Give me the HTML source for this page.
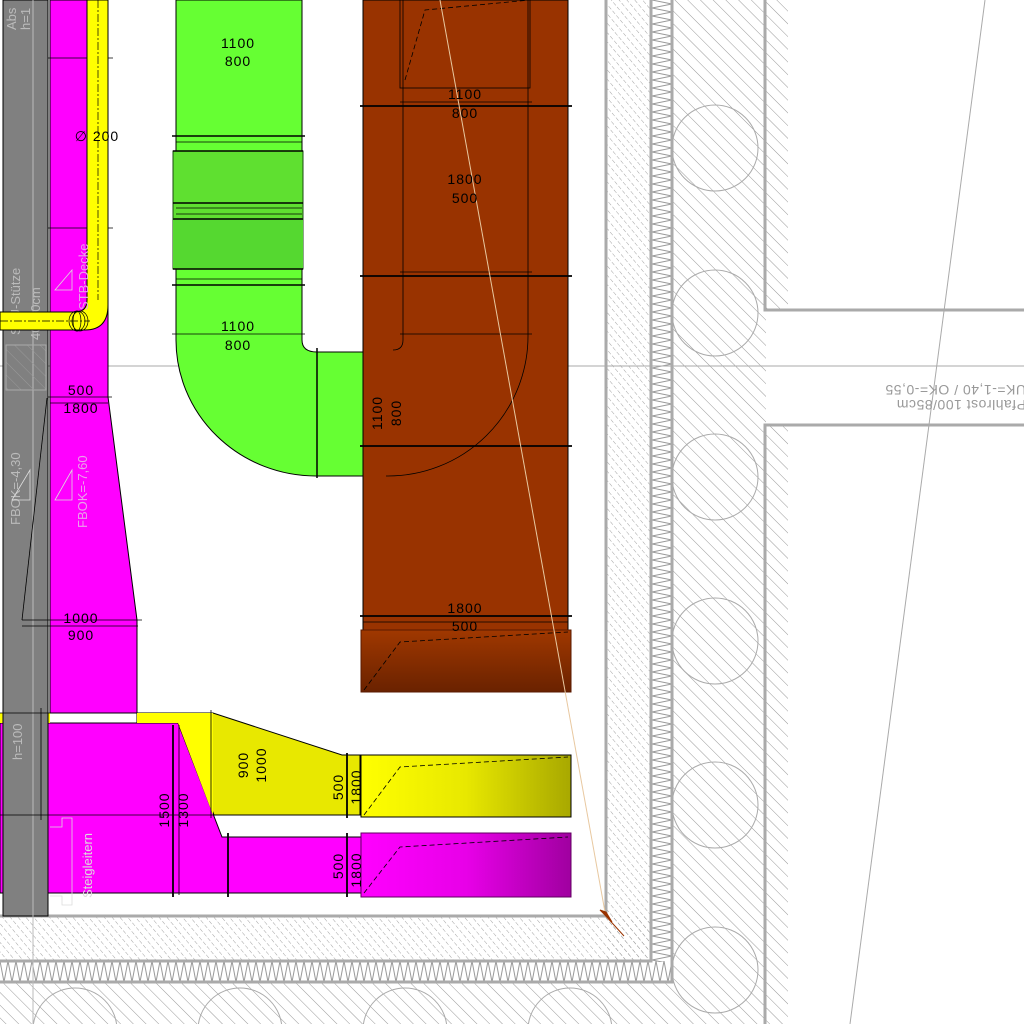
<!DOCTYPE html>
<html><head><meta charset="utf-8"><style>
html,body{margin:0;padding:0;background:#fff;}
svg{display:block;font-family:"Liberation Sans",sans-serif;}
</style></head><body>
<svg width="1024" height="1024" viewBox="0 0 1024 1024" xmlns="http://www.w3.org/2000/svg">
<defs>
<pattern id="h1" width="9" height="9" patternUnits="userSpaceOnUse" patternTransform="rotate(-45)">
<line x1="0" y1="0" x2="0" y2="9" stroke="#999" stroke-width="1"/></pattern>
<pattern id="h2" width="6" height="6" patternUnits="userSpaceOnUse" patternTransform="rotate(-40)">
<line x1="0" y1="0" x2="0" y2="6" stroke="#999" stroke-width="0.9" stroke-dasharray="4 2"/></pattern>
<pattern id="zzv" x="652" width="20" height="8" patternUnits="userSpaceOnUse">
<polyline points="0,0 20,4 0,8" fill="none" stroke="#999" stroke-width="1"/></pattern>
<pattern id="zzh" y="961" width="8" height="21" patternUnits="userSpaceOnUse">
<polyline points="0,0 4,21 8,0" fill="none" stroke="#999" stroke-width="1"/></pattern>
<linearGradient id="gy" x1="0" x2="1"><stop offset="0" stop-color="#ffff00"/><stop offset="0.5" stop-color="#e8e800"/><stop offset="1" stop-color="#a8a800"/></linearGradient>
<linearGradient id="gp" x1="0" x2="1"><stop offset="0" stop-color="#ff00ff"/><stop offset="0.5" stop-color="#e800e8"/><stop offset="1" stop-color="#a000a0"/></linearGradient>
<linearGradient id="gb" x1="0" x2="0" y1="0" y2="1"><stop offset="0" stop-color="#a03800"/><stop offset="1" stop-color="#6a2200"/></linearGradient>
</defs>

<rect x="606" y="0" width="46" height="962" fill="url(#h2)"/>
<rect x="0" y="916" width="652" height="46" fill="url(#h2)"/>
<rect x="652" y="0" width="20" height="962" fill="url(#zzv)"/>
<rect x="0" y="961" width="672" height="21" fill="url(#zzh)"/>
<rect x="672" y="0" width="116" height="1024" fill="url(#h1)"/>
<rect x="0" y="982" width="672" height="42" fill="url(#h1)"/>
<rect x="766" y="311" width="30" height="113" fill="#fff"/>
<g fill="none" stroke="#aaa" stroke-width="1">
<circle cx="715" cy="148" r="43"/><circle cx="715" cy="313" r="43"/><circle cx="715" cy="477" r="43"/>
<circle cx="715" cy="641" r="43"/><circle cx="715" cy="805" r="43"/><circle cx="715" cy="970" r="43"/>
<circle cx="75" cy="1030" r="42"/><circle cx="240" cy="1030" r="42"/><circle cx="405" cy="1030" r="42"/><circle cx="570" cy="1030" r="42"/>
</g>
<g stroke="#aaa" stroke-width="3" fill="none">
<polyline points="606,0 606,916 0,916"/>
<polyline points="651,0 651,961 0,961"/>
<polyline points="672,0 672,982 0,982"/>
<polyline points="765,0 765,310 1024,310"/>
<polyline points="1024,425 765,425 765,1024"/>
</g>
<line x1="0" y1="366" x2="1024" y2="366" stroke="#aaa" stroke-width="1"/>
<line x1="985" y1="0" x2="850" y2="1024" stroke="#aaa" stroke-width="1"/>
<g transform="rotate(180 952 395)" fill="#999" font-size="14" letter-spacing="0.5">
<text x="878" y="390">Pfahlrost 100/85cm</text>
<text x="878" y="405">UK=-1,40 / OK=-0,55</text>
</g>

<path d="M176,0 H302 V340 Q302,352 317,352 H363 V476 H316 A140,136 0 0 1 176,340 Z" fill="#66ff33" stroke="#000" stroke-width="1"/>
<rect x="173" y="151" width="130" height="118" fill="#5fe030" stroke="#1a4a10"/>
<rect x="173" y="218" width="130" height="50" fill="#55d830"/>
<g stroke="#000" stroke-width="1.5"><line x1="172" y1="136" x2="305" y2="136"/><line x1="172" y1="285" x2="305" y2="285"/>
<line x1="173" y1="151" x2="303" y2="151"/><line x1="173" y1="269" x2="303" y2="269"/><line x1="173" y1="203" x2="303" y2="203"/><line x1="173" y1="219" x2="303" y2="219"/>
<line x1="317" y1="348" x2="317" y2="478"/><line x1="386" y1="348" x2="386" y2="478"/></g>
<g stroke="#000" stroke-width="0.7"><line x1="176" y1="142" x2="302" y2="142"/><line x1="176" y1="279" x2="302" y2="279"/><line x1="172" y1="334" x2="305" y2="334"/><line x1="176" y1="208" x2="302" y2="208"/><line x1="176" y1="214" x2="302" y2="214"/></g>

<rect x="363" y="0" width="205" height="630" fill="#993300" stroke="#000"/>
<path d="M403,0 V340 Q403,350 393,350 M528,0 V335 A140,140 0 0 1 386,476" fill="none" stroke="#000" stroke-width="0.8"/>
<rect x="400" y="0" width="130" height="88" fill="none" stroke="#000" stroke-width="0.8"/>
<path d="M405,80 L425,10 L530,0" fill="none" stroke="#000" stroke-width="0.8" stroke-dasharray="5 3"/>
<g stroke="#000" stroke-width="1.8"><line x1="360" y1="106" x2="572" y2="106"/><line x1="360" y1="276" x2="572" y2="276"/><line x1="360" y1="446" x2="572" y2="446"/><line x1="360" y1="616" x2="572" y2="616"/></g>
<g stroke="#000" stroke-width="0.8"><line x1="400" y1="102" x2="532" y2="102"/><line x1="400" y1="272" x2="532" y2="272"/><line x1="400" y1="334" x2="532" y2="334"/><line x1="363" y1="622" x2="568" y2="622"/></g>
<rect x="361" y="630" width="210" height="62" fill="url(#gb)" stroke="#5a1a00"/>
<path d="M364,690 L400,642 L568,632" fill="none" stroke="#000" stroke-width="0.8" stroke-dasharray="5 3"/>
<line x1="440" y1="0" x2="605" y2="912" stroke="#e8c8a0" stroke-width="1"/>

<path d="M50,0 H108 V397 L137,620 V713 H50 Z" fill="#ff00ff" stroke="#000"/>
<path d="M0,723 H178 L222,837 H570 V893 H0 Z" fill="#ff00ff" stroke="#000"/>
<rect x="0" y="713" width="50" height="10" fill="#ffff00"/>
<path d="M137,713 H213 L342,755 H360 V815 H214 L178,723 H137 Z" fill="#e8e800" stroke="#000"/>
<path d="M137,713 H213 V815 L178,723 H137 Z" fill="#ffff00"/>
<rect x="361" y="755" width="210" height="62" fill="url(#gy)" stroke="#000"/>
<path d="M364,815 L400,767 L568,757" fill="none" stroke="#000" stroke-width="0.8" stroke-dasharray="5 3"/>
<rect x="361" y="833" width="210" height="64" fill="url(#gp)" stroke="#600060"/>
<path d="M364,893 L400,847 L568,837" fill="none" stroke="#000" stroke-width="0.8" stroke-dasharray="5 3"/>

<rect x="3" y="0" width="45" height="916" fill="#808080" stroke="#000" stroke-width="1"/>
<line x1="33" y1="0" x2="33" y2="1024" stroke="#bbb" stroke-width="1"/>
<rect x="6" y="345" width="40" height="45" fill="url(#h1)" stroke="#aaa"/>
<g fill="#bbb" font-size="13">
<text transform="translate(16,30) rotate(-90)">Abs</text>
<text transform="translate(30,30) rotate(-90)">h=1</text>
<text transform="translate(20,335) rotate(-90)">STÜ-Stütze</text>
<text transform="translate(40,340) rotate(-90)">40x40cm</text>
<text transform="translate(20,525) rotate(-90)">FBOK=-4,30</text>
<text transform="translate(22,760) rotate(-90)">h=100</text>
</g>

<g stroke="#000" stroke-width="1.8"><line x1="173" y1="725" x2="173" y2="897"/><line x1="228" y1="833" x2="228" y2="897"/><line x1="347" y1="753" x2="347" y2="818"/><line x1="347" y1="833" x2="347" y2="897"/></g>
<g stroke="#000" stroke-width="0.8"><line x1="0" y1="713" x2="137" y2="713"/><line x1="0" y1="815" x2="215" y2="815"/><line x1="211" y1="710" x2="211" y2="818"/><line x1="41" y1="708" x2="41" y2="820"/><line x1="179" y1="725" x2="179" y2="895"/>
<line x1="22" y1="620" x2="142" y2="620"/><line x1="22" y1="626" x2="138" y2="626"/><line x1="48" y1="397" x2="112" y2="397"/><line x1="50" y1="403" x2="108" y2="403"/>
<line x1="48" y1="58" x2="113" y2="58"/><line x1="48" y1="228" x2="113" y2="228"/><line x1="47" y1="398" x2="22" y2="620"/></g>
<path d="M87,0 V300 Q87,312 75,312 H0 V330 H85 Q108,330 108,305 V0 Z" fill="#ffff00" stroke="#000" stroke-width="1"/>
<line x1="98" y1="0" x2="98" y2="300" stroke="#000" stroke-width="0.7" stroke-dasharray="8 2 2 2"/>
<line x1="0" y1="321" x2="90" y2="321" stroke="#000" stroke-width="0.7" stroke-dasharray="8 2 2 2"/>
<g fill="none" stroke="#000" stroke-width="0.7"><ellipse cx="77" cy="321" rx="8" ry="10"/><ellipse cx="77" cy="321" rx="4" ry="10"/><ellipse cx="80" cy="321" rx="8" ry="10"/></g>
<g fill="none" stroke="#ddd" stroke-width="0.8"><path d="M72,270 L55,290 L72,290 Z"/><path d="M72,470 L55,500 L72,500 Z"/><path d="M30,470 L12,500 L30,500 Z"/>
<path d="M50,827 H62 V818 H72 V905 H62 V896 H50"/></g>
<g fill="#eaa0ea" font-size="13"><text transform="translate(88,310) rotate(-90)">STB-Decke</text><text transform="translate(87,528) rotate(-90)">FBOK=-7,60</text>
<text transform="translate(92,898) rotate(-90)" fill="#ddd">Steigleitern</text></g>

<g fill="#000" font-size="14" letter-spacing="1" text-anchor="middle">
<text x="238" y="48">1100</text><text x="238" y="66">800</text>
<text x="238" y="331">1100</text><text x="238" y="350">800</text>
<text x="465" y="99">1100</text><text x="465" y="118">800</text>
<text x="465" y="184">1800</text><text x="465" y="203">500</text>
<text x="465" y="613">1800</text><text x="465" y="631">500</text>
<text x="81" y="395">500</text><text x="81" y="413">1800</text>
<text x="81" y="623">1000</text><text x="81" y="640">900</text>
<text x="97" y="141">∅ 200</text>
<text transform="translate(382,413) rotate(-90)">1100</text><text transform="translate(401,413) rotate(-90)">800</text>
<text transform="translate(248,765) rotate(-90)">900</text><text transform="translate(266,765) rotate(-90)">1000</text>
<text transform="translate(343,787) rotate(-90)">500</text><text transform="translate(361,787) rotate(-90)">1800</text>
<text transform="translate(343,866) rotate(-90)">500</text><text transform="translate(361,870) rotate(-90)">1800</text>
<text transform="translate(169,810) rotate(-90)">1500</text><text transform="translate(188,810) rotate(-90)">1300</text>
</g>
<path d="M600,910 L612,922 L606,912 Z M604,914 L624,936" fill="#993300" stroke="#993300" stroke-width="1"/>
</svg>
</body></html>
